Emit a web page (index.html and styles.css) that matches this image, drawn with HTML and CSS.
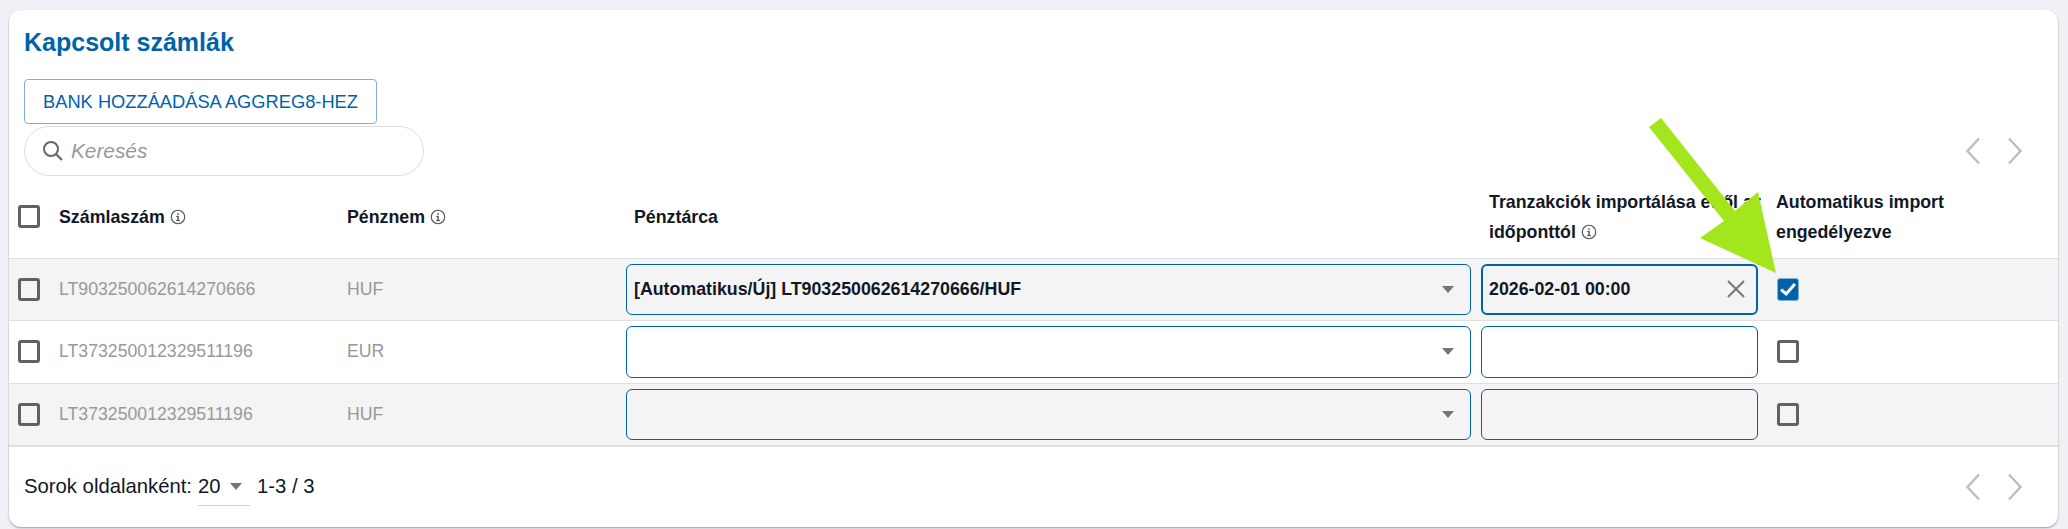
FILE: index.html
```html
<!DOCTYPE html>
<html lang="hu">

<head>
    <meta charset="UTF-8">
    <meta name="viewport" content="width=device-width, initial-scale=1.0">
    <link rel="stylesheet" href="styles.css">
    <title>Kapcsolt számlák</title>
</head>

<body>
    <svg class="defs" width="0" height="0">
        <symbol id="info" viewBox="0 0 14 14">
            <circle cx="7" cy="7" r="5.9" fill="none" stroke="#555" stroke-width="1"/>
            <rect x="6.4" y="6" width="1.3" height="4" fill="#555"/>
            <rect x="6.4" y="3.6" width="1.3" height="1.4" fill="#555"/>
            <rect x="5.4" y="6" width="1.2" height="1" fill="#555"/>
            <rect x="5.4" y="9.6" width="3.3" height="1" fill="#555"/>
        </symbol>
        <symbol id="chev-left" viewBox="0 0 16 28">
            <path d="M14 1.5 L2.5 14 L14 26.5" fill="none" stroke="#bdbdbd" stroke-width="2.4"/>
        </symbol>
        <symbol id="chev-right" viewBox="0 0 16 28">
            <path d="M2 1.5 L13.5 14 L2 26.5" fill="none" stroke="#bdbdbd" stroke-width="2.4"/>
        </symbol>
    </svg>

    <div class="card">
        <h1 class="title">Kapcsolt számlák</h1>
        <button type="button" class="add-button">BANK HOZZÁADÁSA AGGREG8-HEZ</button>

        <div class="toolbar">
            <div class="search">
                <svg class="search-icon" width="24" height="24" viewBox="0 0 24 24">
                    <circle cx="10" cy="10" r="7" fill="none" stroke="#666" stroke-width="2"/>
                    <path d="M15 15 L21 21" stroke="#666" stroke-width="2.2"/>
                </svg>
                <span class="placeholder">Keresés</span>
            </div>
            <div class="pager">
                <svg width="16" height="28"><use href="#chev-left"/></svg>
                <svg width="16" height="28"><use href="#chev-right"/></svg>
            </div>
        </div>

        <div class="row head-row">
            <div class="cell"><span class="check"></span></div>
            <div class="cell head">Számlaszám <svg class="info" width="16" height="16"><use href="#info"/></svg></div>
            <div class="cell head">Pénznem <svg class="info" width="16" height="16"><use href="#info"/></svg></div>
            <div class="cell head wallet-head">Pénztárca</div>
            <div class="cell head date-head"><span>Tranzakciók importálása ettől az időponttól <svg class="info" width="16" height="16"><use href="#info"/></svg></span></div>
            <div class="cell head auto-head"><span>Automatikus import engedélyezve</span></div>
        </div>

        <div class="row shaded">
            <div class="cell"><span class="check"></span></div>
            <div class="cell muted">LT903250062614270666</div>
            <div class="cell muted">HUF</div>
            <div class="cell">
                <div class="field wallet">
                    <span class="value">[Automatikus/Új] LT903250062614270666/HUF</span>
                    <span class="caret"></span>
                </div>
            </div>
            <div class="cell">
                <div class="field date focused">
                    <span class="value">2026-02-01 00:00</span>
                    <svg width="18" height="18" viewBox="0 0 18 18">
                        <path d="M1 1 L17 17 M17 1 L1 17" stroke="#757575" stroke-width="2"/>
                    </svg>
                </div>
            </div>
            <div class="cell auto-cell">
                <span class="check checked">
                    <svg width="20" height="20" viewBox="0 0 16 16">
                        <path d="M2.5 8.5 L6.5 12 L13.5 4" fill="none" stroke="#fff" stroke-width="2.4"/>
                    </svg>
                </span>
            </div>
        </div>

        <div class="row">
            <div class="cell"><span class="check"></span></div>
            <div class="cell muted">LT373250012329511196</div>
            <div class="cell muted">EUR</div>
            <div class="cell"><div class="field wallet"><span class="caret"></span></div></div>
            <div class="cell"><div class="field date"></div></div>
            <div class="cell auto-cell"><span class="check"></span></div>
        </div>

        <div class="row shaded last">
            <div class="cell"><span class="check"></span></div>
            <div class="cell muted">LT373250012329511196</div>
            <div class="cell muted">HUF</div>
            <div class="cell"><div class="field wallet"><span class="caret"></span></div></div>
            <div class="cell"><div class="field date"></div></div>
            <div class="cell auto-cell"><span class="check"></span></div>
        </div>

        <div class="footer">
            <span>Sorok oldalanként:</span>
            <div class="page-size">
                <span>20</span>
                <span class="caret"></span>
            </div>
            <span>1-3 / 3</span>
            <div class="pager">
                <svg width="16" height="28"><use href="#chev-left"/></svg>
                <svg width="16" height="28"><use href="#chev-right"/></svg>
            </div>
        </div>

        <!-- annotation drawn over the table -->
        <svg class="arrow" width="140" height="170" viewBox="0 0 140 170">
            <polygon points="21,8 9,17 84,111 60,128 136,163 118,82 95,101" fill="#a3e61d"/>
        </svg>
    </div>
</body>

</html>
```

FILE: styles.css
```css
* {
    box-sizing: border-box;
}

body {
    margin: 0;
    padding: 10px 10px 2px 9px;
    background-color: #f0f1f6;
    font-family: "Liberation Sans", Arial, sans-serif;
    font-size: 17.7px;
    color: #111827;
}

.defs {
    display: block;
    height: 0;
}

.card {
    position: relative;
    height: 517px;
    background-color: white;
    border-radius: 12px;
    box-shadow: 0 1px 2px #9a9a9a;
}

.title {
    margin: 0;
    padding: 17px 0 0 15px;
    height: 69px;
    font-size: 25px;
    line-height: 30px;
    color: #0063a8;
}

.add-button {
    display: block;
    margin-left: 15px;
    width: 353px;
    height: 45px;
    padding: 0;
    background-color: white;
    border: 1px solid #7fb1d3;
    border-radius: 4px;
    font-family: inherit;
    font-size: 18.3px;
    color: #0063a8;
}

.toolbar {
    display: flex;
    align-items: center;
    justify-content: space-between;
    margin-top: 2px;
    padding: 0 35px 0 15px;
    height: 50px;
}

.search {
    display: flex;
    align-items: center;
    gap: 6px;
    width: 400px;
    height: 50px;
    padding-left: 16px;
    border: 1px solid #dedede;
    border-radius: 25px;
}

.placeholder {
    font-style: italic;
    font-size: 20.8px;
    color: #999;
}

.pager {
    display: flex;
    gap: 26px;
}

.row {
    display: grid;
    grid-template-columns: 50px 288px 279px 855px 295px 1fr;
    height: 62.5px;
    border-bottom: 1px solid #e0e0e0;
}

.head-row {
    height: 82.5px;
    font-weight: bold;
}

.shaded {
    background-color: #f4f4f4;
}

.last {
    height: 63.5px;
    border-bottom-width: 2px;
}

.cell {
    display: flex;
    align-items: center;
}

.cell:first-child {
    padding-left: 9px;
}

.head {
    font-size: 17.8px;
    line-height: 30px;
    gap: 5px;
}

.wallet-head {
    padding-left: 8px;
}

.date-head {
    padding-left: 8px;
    padding-right: 8px;
    display: block;
    padding-top: 11px;
}

.date-head .info {
    vertical-align: -2px;
}

.auto-head {
    display: block;
    padding-top: 11px;
    padding-right: 60px;
}

.info {
    flex-shrink: 0;
}

.muted {
    color: #999;
}

.check {
    display: flex;
    align-items: center;
    justify-content: center;
    width: 22px;
    height: 23px;
    border: 3px solid #616161;
    border-radius: 3px;
}

.checked {
    background-color: #0063a8;
    border: 1px solid #7fb1d3;
}

.auto-cell {
    padding-left: 1px;
}

.field {
    display: flex;
    align-items: center;
    justify-content: space-between;
    height: 51.5px;
    padding: 0 16px 0 7px;
    border: 1px solid #0063a8;
    border-radius: 6px;
}

.wallet {
    width: 845px;
    justify-content: flex-end;
}

.wallet .value {
    margin-right: auto;
}

.date {
    width: 277px;
}

.focused {
    border-width: 2px;
    padding: 0 11px 0 6px;
}

.value {
    font-weight: bold;
    font-size: 17.8px;
}

.caret {
    width: 0;
    height: 0;
    border-left: 6px solid transparent;
    border-right: 6px solid transparent;
    border-top: 7px solid #757575;
}

.footer {
    display: flex;
    align-items: center;
    height: 79px;
    padding: 0 35px 0 15px;
    font-size: 20.3px;
}

.page-size {
    display: flex;
    align-items: center;
    gap: 9px;
    width: 52px;
    height: 39px;
    margin: 0 7px 0 6px;
    border-bottom: 1px solid #d0d0d0;
}

.footer .pager {
    margin-left: auto;
}

.arrow {
    position: absolute;
    left: 1631px;
    top: 100px;
}
```
